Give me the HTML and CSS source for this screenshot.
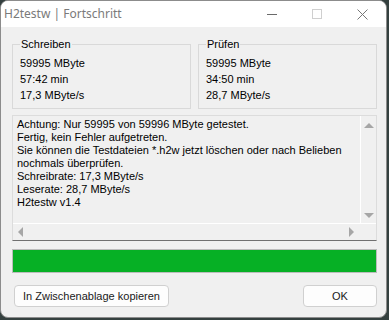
FILE: index.html
```html
<!DOCTYPE html>
<html>
<head>
<meta charset="utf-8">
<title>H2testw | Fortschritt</title>
<link rel="stylesheet" href="styles.css">
</head>
<body>

<div class="window">
  <div class="titlebar">
    <span class="title">H2testw | Fortschritt</span>
    <span class="ctl">
      <svg width="10" height="10" viewBox="0 0 10 10"><path d="M0 5.5 H10" stroke="#6a6a6a" stroke-width="1"/></svg>
    </span>
    <span class="ctl">
      <svg width="10" height="10" viewBox="0 0 10 10"><rect x="0.5" y="0.5" width="9" height="9" fill="none" stroke="#cfcfcf" stroke-width="1"/></svg>
    </span>
    <span class="ctl">
      <svg width="11" height="11" viewBox="0 0 11 11"><path d="M0.5 0.5 L10.5 10.5 M10.5 0.5 L0.5 10.5" stroke="#777" stroke-width="1"/></svg>
    </span>
  </div>

  <div class="content">
    <div class="groups">
      <fieldset class="group">
        <legend>Schreiben</legend>
        <div>59995 MByte</div>
        <div>57:42 min</div>
        <div>17,3 MByte/s</div>
      </fieldset>
      <fieldset class="group">
        <legend>Prüfen</legend>
        <div>59995 MByte</div>
        <div>34:50 min</div>
        <div>28,7 MByte/s</div>
      </fieldset>
    </div>

    <div class="memo">
      <div class="memo-main">
        <div class="memo-text">
          Achtung: Nur 59995 von 59996 MByte getestet.<br>
          Fertig, kein Fehler aufgetreten.<br>
          Sie können die Testdateien *.h2w jetzt löschen oder nach Belieben<br>
          nochmals überprüfen.<br>
          Schreibrate: 17,3 MByte/s<br>
          Leserate: 28,7 MByte/s<br>
          H2testw v1.4
        </div>
        <div class="vscroll">
          <span class="arr up"></span>
          <span class="arr down"></span>
        </div>
      </div>
      <div class="hscroll">
        <span class="arr left"></span>
        <span class="arr right"></span>
        <span class="corner"></span>
      </div>
    </div>

    <div class="progress"><div class="bar"></div></div>

    <div class="buttons">
      <button type="button" class="btn">In Zwischenablage kopieren</button>
      <button type="button" class="btn ok">OK</button>
    </div>
  </div>
</div>

</body>
</html>
```

FILE: styles.css
```css
html,body,div,fieldset,legend,button{margin:0;padding:0;}
*{box-sizing:border-box;}
body{
  background:#34403f;
  width:389px;
  height:320px;
  overflow:hidden;
}
.window{
  width:387px;
  height:318px;
  background:#f0f0f0;
  border:1px solid #8c8c8c;
  border-radius:8px;
  overflow:hidden;
}
.titlebar{
  height:26px;
  background:#fff;
  display:flex;
  align-items:center;
  font-family:"Noto Sans",sans-serif;
  font-size:12px;
  color:#7a7a7a;
}
.title{flex:1;padding-left:3px;padding-bottom:1px;}
.ctl{width:45px;height:26px;display:flex;align-items:center;justify-content:center;}
.ctl:last-child{width:47px;}

.content{
  padding:0 9px 0 11px;
  font-family:"Liberation Sans",Arial,sans-serif;
  font-size:11px;
  color:#000;
}
.groups{display:flex;gap:7px;padding-top:11px;}
.group{
  flex:1;
  height:71px;
  border:1px solid #d9d9d9;
  padding:4px 7px 0 7px;
  line-height:16px;
}
.group legend{padding:0 1px;margin-left:0;line-height:13px;}

.memo{
  margin-top:6px;
  height:126px;
  border:1px solid #dcdcdc;
  border-bottom:1px solid #707070;
  display:flex;
  flex-direction:column;
}
.memo-main{flex:1;display:flex;}
.memo-text{
  flex:1;
  padding:2px 4px;
  line-height:13px;
  white-space:nowrap;
}
.vscroll{
  width:16px;
  background:#f0f0f0;
  border-left:1px solid #fff;
  display:flex;
  flex-direction:column;
  justify-content:space-between;
  align-items:center;
  padding:7px 0 5px;
}
.hscroll{
  height:17px;
  border-top:1px solid #fff;
  display:flex;
  align-items:center;
  padding-left:5px;
}
.hscroll .right{margin-left:auto;margin-right:6px;}
.corner{width:16px;height:16px;}
.arr{width:0;height:0;display:block;}
.up{border-left:5px solid transparent;border-right:5px solid transparent;border-bottom:5px solid #a6a6a6;}
.down{border-left:5px solid transparent;border-right:5px solid transparent;border-top:5px solid #a6a6a6;}
.left{border-top:5px solid transparent;border-bottom:5px solid transparent;border-right:5px solid #a6a6a6;}
.right{border-top:5px solid transparent;border-bottom:5px solid transparent;border-left:5px solid #a6a6a6;}

.progress{
  margin-top:8px;
  height:24px;
  border:1px solid #bcbcbc;
  background:#e6e6e6;
}
.bar{width:100%;height:100%;background:#06b025;}

.buttons{display:flex;justify-content:space-between;margin-top:12px;padding-left:2px;}
.btn{
  height:22px;
  background:#fdfdfd;
  border:1px solid #d0d0d0;
  border-radius:4px;
  font-family:"Liberation Sans",Arial,sans-serif;
  font-size:11px;
  color:#1a1a1a;
  padding:0 8px;
}
.ok{width:74px;}
```
